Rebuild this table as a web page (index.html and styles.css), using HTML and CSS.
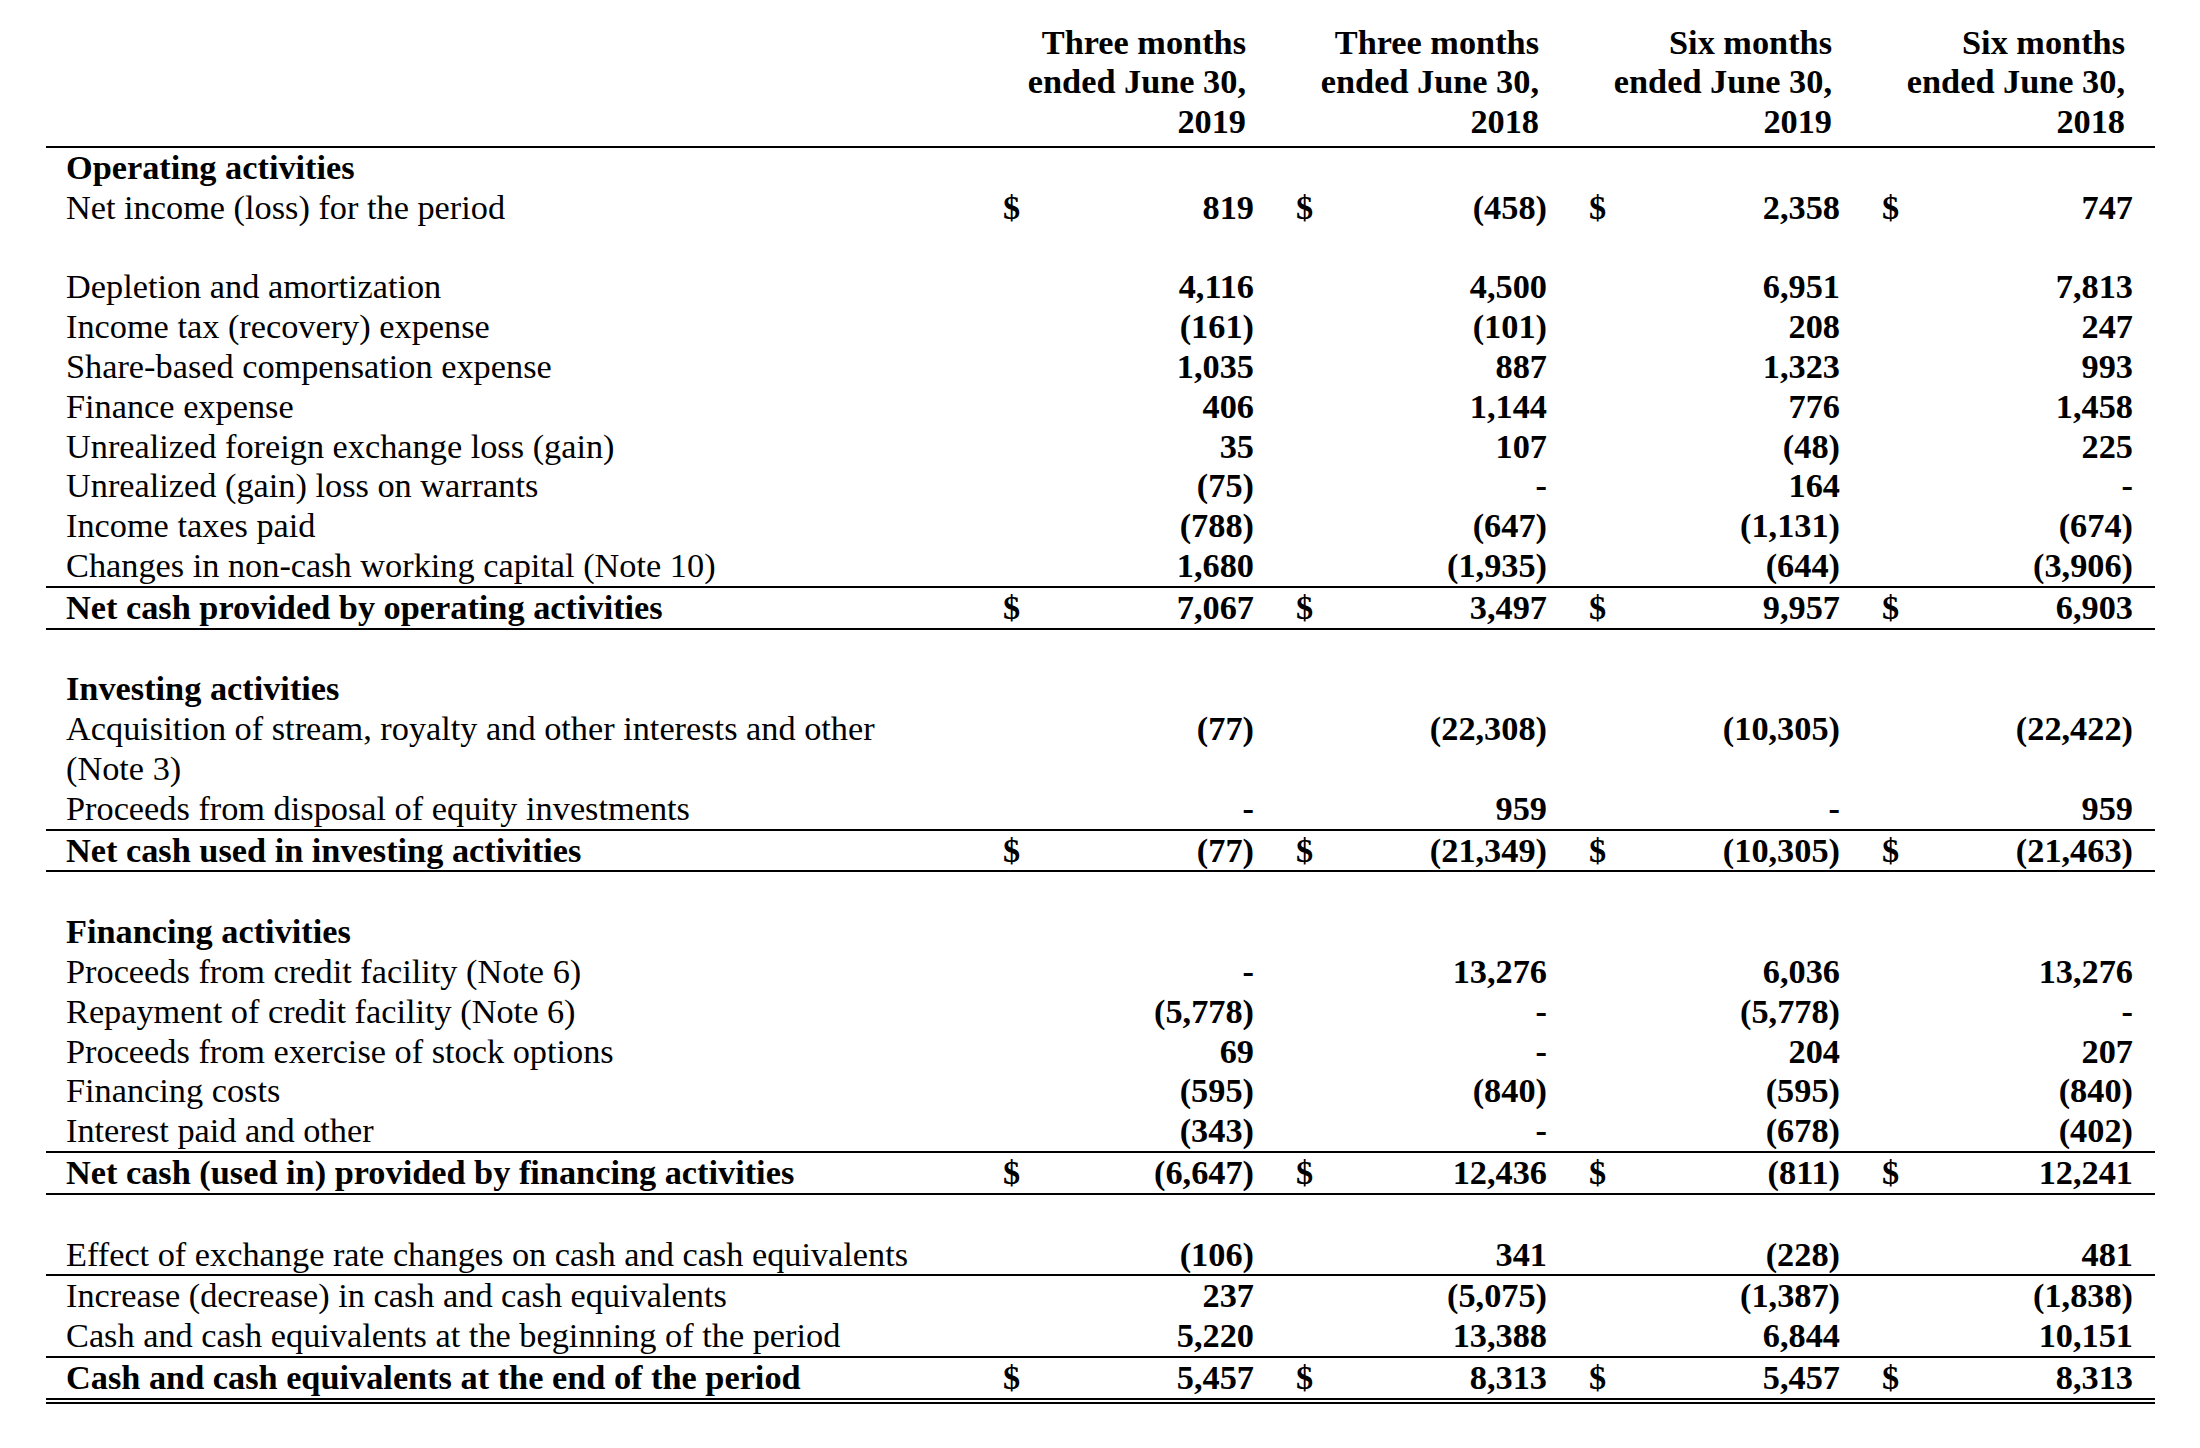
FILE: index.html
```html
<!DOCTYPE html>
<html lang="en">
<head>
<meta charset="utf-8">
<title>Cash flow statement</title>
<link rel="stylesheet" href="styles.css">
</head>
<body>
<div class="sheet">
<table class="cf">
  <colgroup>
    <col class="c-label">
    <col class="c-cur"><col class="c-num">
    <col class="c-cur"><col class="c-num">
    <col class="c-cur"><col class="c-num">
    <col class="c-cur"><col class="c-num">
  </colgroup>
  <thead>
    <tr class="head">
      <th class="hl"></th>
      <th class="hd" colspan="2">Three months<br>ended June 30,<br>2019</th>
      <th class="hd" colspan="2">Three months<br>ended June 30,<br>2018</th>
      <th class="hd" colspan="2">Six months<br>ended June 30,<br>2019</th>
      <th class="hd" colspan="2">Six months<br>ended June 30,<br>2018</th>
    </tr>
  </thead>
  <tbody>
    <tr class="sec"><td class="label b">Operating activities</td><td></td><td></td><td></td><td></td><td></td><td></td><td></td><td></td></tr>
    <tr><td class="label">Net income (loss) for the period</td><td class="cur">$</td><td class="num">819</td><td class="cur">$</td><td class="num">(458)</td><td class="cur">$</td><td class="num">2,358</td><td class="cur">$</td><td class="num">747</td></tr>
    <tr class="blank"><td colspan="9">&nbsp;</td></tr>
    <tr><td class="label">Depletion and amortization</td><td></td><td class="num">4,116</td><td></td><td class="num">4,500</td><td></td><td class="num">6,951</td><td></td><td class="num">7,813</td></tr>
    <tr><td class="label">Income tax (recovery) expense</td><td></td><td class="num">(161)</td><td></td><td class="num">(101)</td><td></td><td class="num">208</td><td></td><td class="num">247</td></tr>
    <tr><td class="label">Share-based compensation expense</td><td></td><td class="num">1,035</td><td></td><td class="num">887</td><td></td><td class="num">1,323</td><td></td><td class="num">993</td></tr>
    <tr><td class="label">Finance expense</td><td></td><td class="num">406</td><td></td><td class="num">1,144</td><td></td><td class="num">776</td><td></td><td class="num">1,458</td></tr>
    <tr><td class="label">Unrealized foreign exchange loss (gain)</td><td></td><td class="num">35</td><td></td><td class="num">107</td><td></td><td class="num">(48)</td><td></td><td class="num">225</td></tr>
    <tr><td class="label">Unrealized (gain) loss on warrants</td><td></td><td class="num">(75)</td><td></td><td class="num">-</td><td></td><td class="num">164</td><td></td><td class="num">-</td></tr>
    <tr><td class="label">Income taxes paid</td><td></td><td class="num">(788)</td><td></td><td class="num">(647)</td><td></td><td class="num">(1,131)</td><td></td><td class="num">(674)</td></tr>
    <tr class="ruled"><td class="label">Changes in non-cash working capital (Note 10)</td><td></td><td class="num">1,680</td><td></td><td class="num">(1,935)</td><td></td><td class="num">(644)</td><td></td><td class="num">(3,906)</td></tr>
    <tr class="ruled"><td class="label b">Net cash provided by operating activities</td><td class="cur">$</td><td class="num">7,067</td><td class="cur">$</td><td class="num">3,497</td><td class="cur">$</td><td class="num">9,957</td><td class="cur">$</td><td class="num">6,903</td></tr>
    <tr class="blank"><td colspan="9">&nbsp;</td></tr>

    <tr class="sec"><td class="label b">Investing activities</td><td></td><td></td><td></td><td></td><td></td><td></td><td></td><td></td></tr>
    <tr><td class="label">Acquisition of stream, royalty and other interests and other (Note 3)</td><td></td><td class="num">(77)</td><td></td><td class="num">(22,308)</td><td></td><td class="num">(10,305)</td><td></td><td class="num">(22,422)</td></tr>
    <tr class="ruled"><td class="label">Proceeds from disposal of equity investments</td><td></td><td class="num">-</td><td></td><td class="num">959</td><td></td><td class="num">-</td><td></td><td class="num">959</td></tr>
    <tr class="ruled"><td class="label b">Net cash used in investing activities</td><td class="cur">$</td><td class="num">(77)</td><td class="cur">$</td><td class="num">(21,349)</td><td class="cur">$</td><td class="num">(10,305)</td><td class="cur">$</td><td class="num">(21,463)</td></tr>
    <tr class="blank"><td colspan="9">&nbsp;</td></tr>

    <tr class="sec"><td class="label b">Financing activities</td><td></td><td></td><td></td><td></td><td></td><td></td><td></td><td></td></tr>
    <tr><td class="label">Proceeds from credit facility (Note 6)</td><td></td><td class="num">-</td><td></td><td class="num">13,276</td><td></td><td class="num">6,036</td><td></td><td class="num">13,276</td></tr>
    <tr><td class="label">Repayment of credit facility (Note 6)</td><td></td><td class="num">(5,778)</td><td></td><td class="num">-</td><td></td><td class="num">(5,778)</td><td></td><td class="num">-</td></tr>
    <tr><td class="label">Proceeds from exercise of stock options</td><td></td><td class="num">69</td><td></td><td class="num">-</td><td></td><td class="num">204</td><td></td><td class="num">207</td></tr>
    <tr><td class="label">Financing costs</td><td></td><td class="num">(595)</td><td></td><td class="num">(840)</td><td></td><td class="num">(595)</td><td></td><td class="num">(840)</td></tr>
    <tr class="ruled"><td class="label">Interest paid and other</td><td></td><td class="num">(343)</td><td></td><td class="num">-</td><td></td><td class="num">(678)</td><td></td><td class="num">(402)</td></tr>
    <tr class="ruled"><td class="label b">Net cash (used in) provided by financing activities</td><td class="cur">$</td><td class="num">(6,647)</td><td class="cur">$</td><td class="num">12,436</td><td class="cur">$</td><td class="num">(811)</td><td class="cur">$</td><td class="num">12,241</td></tr>
    <tr class="blank"><td colspan="9">&nbsp;</td></tr>

    <tr class="ruled"><td class="label">Effect of exchange rate changes on cash and cash equivalents</td><td></td><td class="num">(106)</td><td></td><td class="num">341</td><td></td><td class="num">(228)</td><td></td><td class="num">481</td></tr>
    <tr><td class="label">Increase (decrease) in cash and cash equivalents</td><td></td><td class="num">237</td><td></td><td class="num">(5,075)</td><td></td><td class="num">(1,387)</td><td></td><td class="num">(1,838)</td></tr>
    <tr class="ruled"><td class="label">Cash and cash equivalents at the beginning of the period</td><td></td><td class="num">5,220</td><td></td><td class="num">13,388</td><td></td><td class="num">6,844</td><td></td><td class="num">10,151</td></tr>
    <tr class="grand"><td class="label b">Cash and cash equivalents at the end of the period</td><td class="cur">$</td><td class="num">5,457</td><td class="cur">$</td><td class="num">8,313</td><td class="cur">$</td><td class="num">5,457</td><td class="cur">$</td><td class="num">8,313</td></tr>
  </tbody>
</table>
</div>
</body>
</html>
```

FILE: styles.css
```css
html, body {
  margin: 0;
  padding: 0;
  background: #ffffff;
}

body {
  color: #000000;
  font-family: "Liberation Serif", "Times New Roman", Times, serif;
  font-size: 34.3px;
  line-height: 39.8px;
}

.sheet {
  padding: 22.6px 0 0 46px;
}

.cf {
  border-collapse: separate;
  border-spacing: 0;
  table-layout: fixed;
  width: 2109px;
}

.c-label { width: 937px; }
.c-cur { width: 45px; }
.c-num { width: 248px; }

.cf th,
.cf td {
  padding: 0;
  vertical-align: top;
  white-space: nowrap;
}

.cf th.hd {
  text-align: right;
  font-weight: bold;
  padding: 0 30px 4px 0;
  border-bottom: 2px solid #000000;
}

.cf th.hl {
  border-bottom: 2px solid #000000;
  padding-bottom: 4px;
}

.cf td.label {
  padding-left: 20px;
  padding-right: 40px;
  white-space: normal;
  text-align: left;
}

.cf td.b {
  font-weight: bold;
}

.cf td.cur {
  padding-left: 20px;
  font-weight: bold;
  text-align: left;
}

.cf td.num {
  padding-right: 22px;
  font-weight: bold;
  text-align: right;
}

.cf tr.ruled td {
  border-bottom: 2px solid #000000;
}

.cf tr.grand td {
  border-bottom: 6px double #000000;
}
```
